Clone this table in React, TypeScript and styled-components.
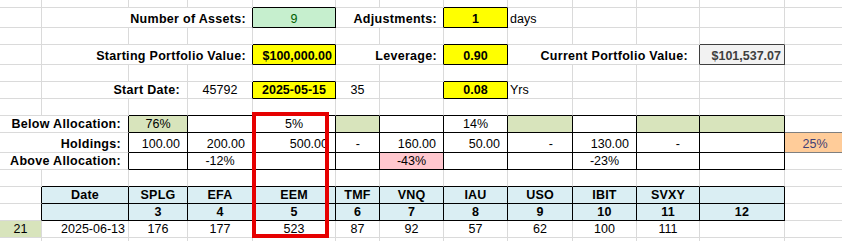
import styled, { createGlobalStyle } from 'styled-components';

const GlobalStyle = createGlobalStyle`
    html, body {
        margin: 0;
        padding: 0;
        background: #ffffff;
        overflow: hidden;
    }
    body {
        font-family: "Liberation Sans", Arial, sans-serif;
        font-size: 12.5px;
        color: #000000;
    }
`;

const GRID_LINE = '#dadada';
const COLS = 'ABCDEFGHIJKLM'.split('');
const COL_WIDTHS = [42, 87, 59, 65, 83, 44, 64, 64, 65, 64, 63, 85, 61];
const ROW_HEIGHTS = [8, 20, 17, 20, 17, 17, 17, 17, 20, 17, 17, 17, 17, 17, 17];

type Align = 'left' | 'center' | 'right';

interface CellDef {
    text?: string;
    span?: number;
    align?: Align;
    bold?: boolean;
    fill?: string;
    ink?: string;
    box?: string;
    pad?: number;
    track?: number;
}

type RowDef = Partial<Record<string, CellDef>>;

// cell presets
const label = (text: string, span: number, pad = 6): CellDef => ({
    text, span, align: 'right', bold: true, pad, track: 0.3,
});
const input = (text: string, align: Align = 'center'): CellDef => ({
    text, align, bold: true, fill: '#ffff00', box: '#000', pad: 3,
});
const boxed = (text = '', fill = '#ffffff', align: Align = 'center', pad = 2): CellDef => ({ text, fill, align, box: '#000', pad });
const money = (text: string): CellDef => ({ text, align: 'right', box: '#000', pad: 7 });
const dash = (): CellDef => ({ text: '-', align: 'right', box: '#000', pad: 19 });
const head = (text = ''): CellDef => ({ text, align: 'center', bold: true, fill: '#daeef3', box: '#000', track: 0.2 });
const plain = (text: string, align: Align = 'center', pad = 2): CellDef => ({ text, align, pad });

const OLIVE = '#d8e4bc';

const sheet: RowDef[] = [
    {},
    {
        B: label('Number of Assets:', 3),
        E: { text: '9', align: 'center', fill: '#c6efce', ink: '#006100', box: '#000' },
        F: label('Adjustments:', 2),
        H: input('1'),
        I: plain('days', 'left'),
    },
    {},
    {
        B: label('Starting Portfolio Value:', 3),
        E: input('$100,000.00', 'right'),
        F: label('Leverage:', 2),
        H: input('0.90'),
        I: label('Current Portfolio Value:', 3, 11),
        L: { text: '$101,537.07', align: 'right', bold: true, fill: '#f2f2f2', ink: '#3f3f3f', box: '#3f3f3f', pad: 3 },
    },
    {},
    {
        B: label('Start Date:', 2, 7),
        D: plain('45792'),
        E: input('2025-05-15'),
        F: plain('35'),
        H: input('0.08'),
        I: plain('Yrs', 'left'),
    },
    {},
    {
        A: label('Below Allocation:', 2, 7),
        C: boxed('76%', OLIVE),
        D: boxed(),
        E: boxed('5%'),
        F: boxed('', OLIVE),
        G: boxed(),
        H: boxed('14%'),
        I: boxed('', OLIVE),
        J: boxed(),
        K: boxed('', OLIVE),
        L: boxed('', OLIVE),
    },
    {
        A: label('Holdings:', 2, 7),
        C: money('100.00'),
        D: money('200.00'),
        E: money('500.00'),
        F: dash(),
        G: money('160.00'),
        H: money('50.00'),
        I: dash(),
        J: money('130.00'),
        K: dash(),
        L: boxed(),
        M: { text: '25%', align: 'center', fill: '#ffcc99', ink: '#3f3f76', box: '#7f7f7f' },
    },
    {
        A: label('Above Allocation:', 2, 7),
        C: boxed(),
        D: boxed('-12%'),
        E: boxed(),
        F: boxed(),
        G: boxed('-43%', '#ffc7ce'),
        H: boxed(),
        I: boxed(),
        J: boxed('-23%'),
        K: boxed(),
        L: boxed(),
    },
    {},
    {
        B: head('Date'), C: head('SPLG'), D: head('EFA'), E: head('EEM'), F: head('TMF'),
        G: head('VNQ'), H: head('IAU'), I: head('USO'), J: head('IBIT'), K: head('SVXY'), L: head(),
    },
    {
        B: head(), C: head('3'), D: head('4'), E: head('5'), F: head('6'), G: head('7'),
        H: head('8'), I: head('9'), J: head('10'), K: head('11'), L: head('12'),
    },
    {
        A: { text: '21', align: 'center', fill: OLIVE },
        B: plain('2025-06-13', 'right', 3),
        C: plain('176'), D: plain('177'), E: plain('523'), F: plain('87'), G: plain('92'),
        H: plain('57'), I: plain('62'), J: plain('100'), K: plain('111'),
    },
    {},
];

const Sheet = styled.div`
    position: relative;
    display: grid;
    grid-template-columns: ${COL_WIDTHS.map((w) => `${w}px`).join(' ')};
    grid-template-rows: ${ROW_HEIGHTS.map((h) => `${h}px`).join(' ')};
    width: 842px;
    height: 241px;
    overflow: hidden;
`;

const Cell = styled.div<{
    $span: number;
    $align: Align;
    $bold: boolean;
    $fill: string;
    $ink: string;
    $right: string;
    $bottom: string;
    $pad: number;
    $track: number;
}>`
    grid-column: span ${(p) => p.$span};
    display: flex;
    align-items: flex-end;
    justify-content: ${(p) => (p.$align === 'left' ? 'flex-start' : p.$align === 'right' ? 'flex-end' : 'center')};
    padding: 0 ${(p) => p.$pad}px;
    min-width: 0;
    background: ${(p) => p.$fill};
    color: ${(p) => p.$ink};
    font-weight: ${(p) => (p.$bold ? 700 : 400)};
    letter-spacing: ${(p) => p.$track}px;
    line-height: 15px;
    white-space: nowrap;
    overflow: hidden;
    border-right: 1px solid ${(p) => p.$right};
    border-bottom: 1px solid ${(p) => p.$bottom};
`;

const Highlight = styled.div`
    position: absolute;
    left: 252px;
    top: 112px;
    width: 77px;
    height: 126px;
    box-sizing: border-box;
    border: 4px solid #e60000;
    pointer-events: none;
`;

// expand each row into a column -> cell lookup so neighbours can share borders
function expand(row: RowDef): (CellDef | undefined)[] {
    const out: (CellDef | undefined)[] = new Array(COLS.length).fill(undefined);
    COLS.forEach((c, i) => {
        const def = row[c];
        if (def) {
            for (let k = 0; k < (def.span || 1); k++) out[i + k] = def;
        }
    });
    return out;
}

function App() {
    const grid = sheet.map(expand);

    const cells: JSX.Element[] = [];
    grid.forEach((row, r) => {
        let c = 0;
        while (c < COLS.length) {
            const def = row[c] || {};
            const span = def.span || 1;
            const last = c + span - 1;
            const rightBox = row[last + 1]?.box;
            const belowBox = grid[r + 1]?.[c]?.box;
            cells.push(
                <Cell
                    key={`${r}-${c}`}
                    $span={span}
                    $align={def.align || 'left'}
                    $bold={!!def.bold}
                    $fill={def.fill || 'transparent'}
                    $ink={def.ink || '#000'}
                    $right={def.box || rightBox || GRID_LINE}
                    $bottom={def.box || belowBox || GRID_LINE}
                    $pad={def.pad ?? 2}
                    $track={def.track ?? 0}
                >
                    {def.text}
                </Cell>
            );
            c += span;
        }
    });

    return (
        <>
            <GlobalStyle />
            <Sheet>
                {cells}
                <Highlight />
            </Sheet>
        </>
    );
}

export default App;
